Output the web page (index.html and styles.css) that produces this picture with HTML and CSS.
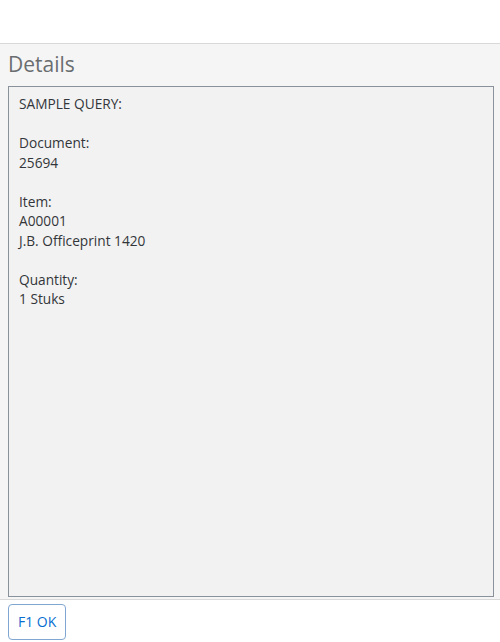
FILE: index.html
```html
<!DOCTYPE html>
<html>
<head>
<meta charset="utf-8">
<link rel="stylesheet" href="styles.css">
</head>
<body>
<div class="dialog">
  <div class="header"></div>
  <div class="content">
    <h2 class="title">Details</h2>
    <div class="textbox">
      <p>SAMPLE QUERY:</p>
      <p>&nbsp;</p>
      <p>Document:</p>
      <p>25694</p>
      <p>&nbsp;</p>
      <p>Item:</p>
      <p>A00001</p>
      <p>J.B. Officeprint 1420</p>
      <p>&nbsp;</p>
      <p>Quantity:</p>
      <p>1 Stuks</p>
    </div>
  </div>
  <div class="footer">
    <button class="btn">F1 OK</button>
  </div>
</div>
</body>
</html>
```
FILE: styles.css
```css
html, body {
  margin: 0;
  padding: 0;
  background: #ffffff;
  height: 100%;
}
body {
  font-family: "Open Sans", "Liberation Sans", sans-serif;
  color: #32363a;
}
.dialog {
  height: 642px;
  display: flex;
  flex-direction: column;
  background: #ffffff;
  border-radius: 0 0 5px 5px;
  overflow: hidden;
}
.header {
  height: 43px;
  flex: none;
  border-bottom: 1px solid #d9d9d9;
}
.content {
  flex: 1;
  display: flex;
  flex-direction: column;
  background: #f5f5f5;
  padding: 0 6px 2px 8px;
  min-height: 0;
}
.title {
  margin: 0;
  height: 42px;
  font-size: 21px;
  font-weight: 400;
  line-height: 41px;
  color: #6a6d70;
}
.textbox {
  flex: 1;
  background: #f2f2f2;
  border: 1px solid #89919a;
  padding: 7px 10px;
  font-size: 13.7px;
  line-height: 19.5px;
}
.textbox p {
  margin: 0;
}
.footer {
  height: 43px;
  flex: none;
  border-top: 1px solid #d9d9d9;
  padding: 4px 8px 0;
  box-sizing: border-box;
}
.btn {
  height: 36px;
  padding: 0 9px 2px;
  background: #ffffff;
  border: 1px solid #80a6d2;
  border-radius: 4px;
  color: #0a6ed1;
  font-family: "Open Sans", "Liberation Sans", sans-serif;
  font-size: 14px;
}
```
